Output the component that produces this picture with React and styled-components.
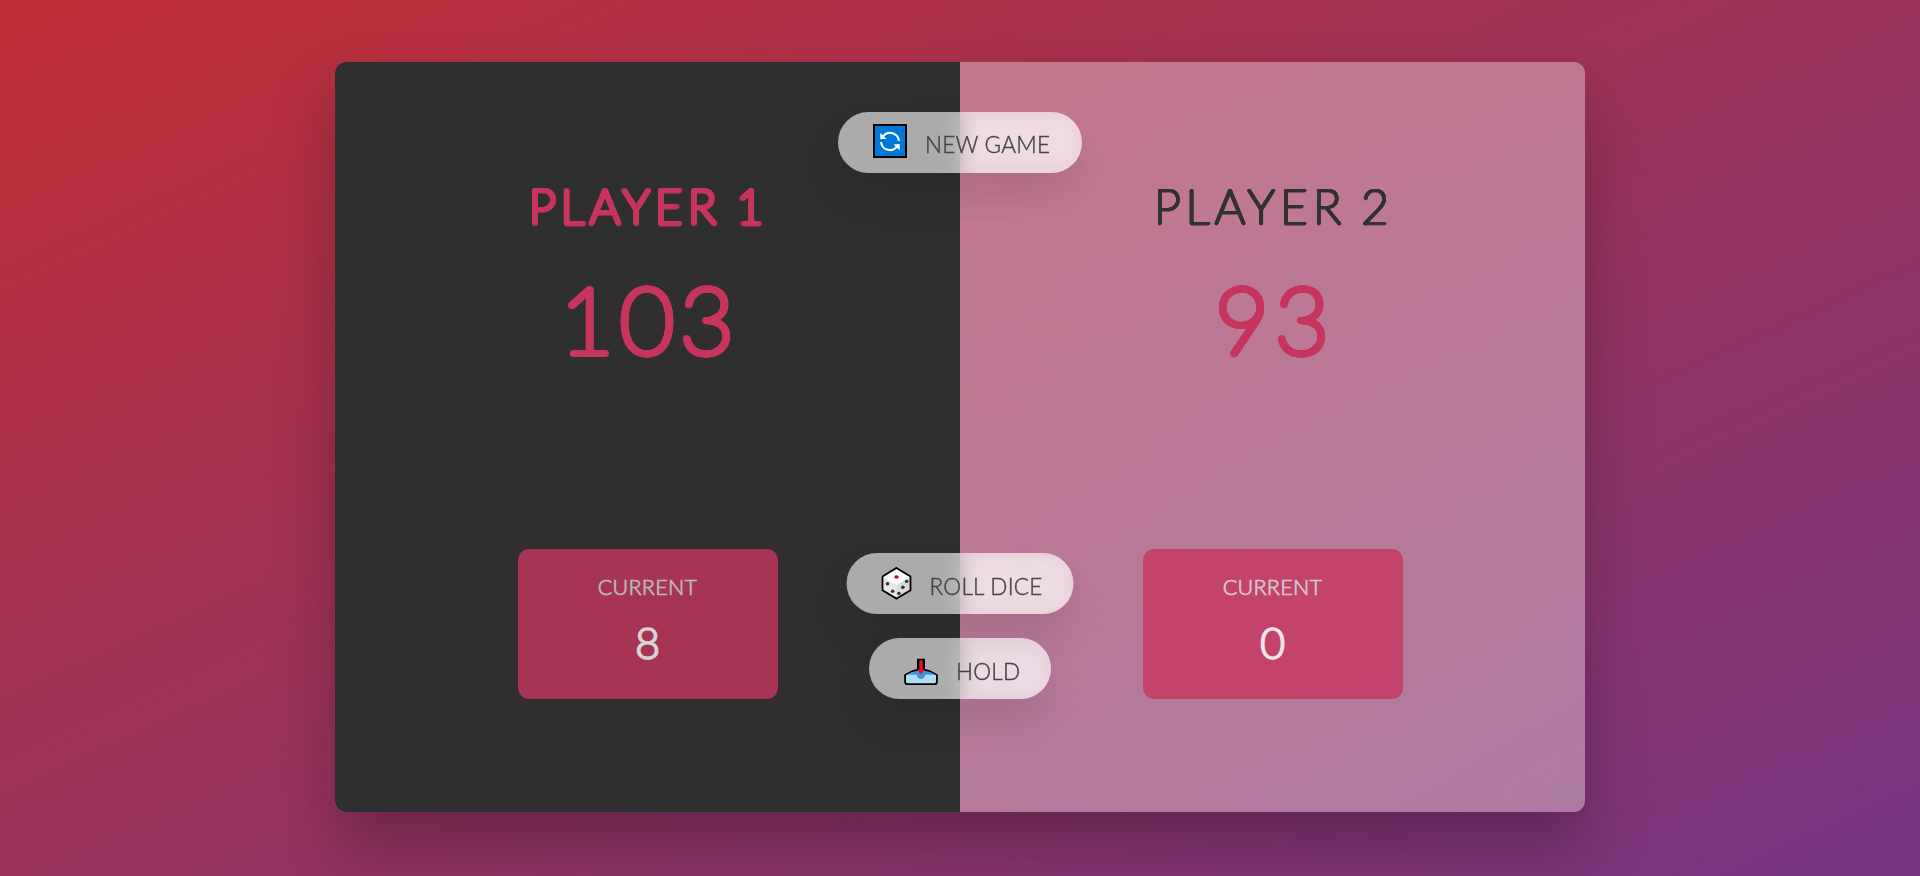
import React from 'react';
import styled, { createGlobalStyle, css } from 'styled-components';

// Rings of shadows thicken a hairline face into strokes with round ends.
const roundStroke = (radius) => {
  const shadows = [];
  for (const r of [radius, radius * 0.55]) {
    for (let i = 0; i < 24; i += 1) {
      const a = (i * Math.PI) / 12;
      shadows.push(`${(Math.cos(a) * r).toFixed(2)}px ${(Math.sin(a) * r).toFixed(2)}px 0 currentColor`);
    }
  }
  return shadows.join(', ');
};

const GlobalStyle = createGlobalStyle`
  *, *::before, *::after { margin: 0; padding: 0; box-sizing: inherit; }
  html { font-size: 12.5px; box-sizing: border-box; }
  body {
    font-family: Lato, "Open Sans", sans-serif;
    font-weight: 300;
    height: 100vh;
    color: #333;
    background-image: linear-gradient(to top left, #753682 0%, #bf2e34 100%);
    display: flex;
    align-items: center;
    justify-content: center;
    overflow: hidden;
  }
`;

const Board = styled.main`
  position: relative;
  width: 100rem;
  height: 60rem;
  margin-bottom: 2px;
  background-color: rgba(255, 255, 255, 0.35);
  backdrop-filter: blur(250px);
  box-shadow: 0 3rem 5rem rgba(0, 0, 0, 0.25);
  border-radius: 11.25px;
  overflow: hidden;
  display: flex;
`;

const Player = styled.section`
  flex: 50%;
  padding: 9rem 9rem 113px;
  display: flex;
  flex-direction: column;
  align-items: center;
  ${({ $winner }) => $winner && css`background-color: #2f2f2f;`}
`;

const Name = styled.h2`
  font-size: 47.5px;
  line-height: 62px;
  text-transform: uppercase;
  letter-spacing: 5.3px;
  word-spacing: -4px;
  padding-left: 3px;
  font-weight: 100;
  text-shadow: ${({ $winner }) => roundStroke($winner ? 2.5 : 1.5)};
  color: ${({ $winner }) => ($winner ? '#c7365f' : '#333')};
  margin-bottom: 1rem;
`;

const Score = styled.p`
  font-size: 93px;
  line-height: 139px;
  font-weight: 100;
  letter-spacing: 6px;
  padding-left: 5px;
  text-shadow: ${roundStroke(3.3)};
  color: #c7365f;
  margin-bottom: auto;
`;

const Current = styled.div`
  background-color: #c7365f;
  opacity: 0.8;
  border-radius: 11.25px;
  color: #fff;
  width: 65%;
  height: 150px;
  padding: 24px 2rem;
  text-align: center;
`;

const CurrentLabel = styled.p`
  text-transform: uppercase;
  margin-bottom: 11px;
  font-size: 21.5px;
  line-height: 29px;
  letter-spacing: 0.3px;
  -webkit-text-stroke: 0.7px;
  color: #ddd;
`;

const CurrentScore = styled.p`
  font-size: 43.5px;
  line-height: 59px;
  -webkit-text-stroke: 1.6px;
`;

const Button = styled.button`
  position: absolute;
  left: 50%;
  top: ${({ $top }) => $top};
  transform: translateX(-50%);
  display: flex;
  align-items: flex-start;
  gap: ${({ $gap = 18 }) => $gap}px;
  width: ${({ $width }) => $width}px;
  height: 60.5px;
  padding: 12px 0 0 ${({ $inset = 35 }) => $inset}px;
  border: none;
  border-radius: 50rem;
  color: #444;
  font-family: inherit;
  font-size: 1.8rem;
  font-weight: 300;
  line-height: ${({ $line = 43 }) => $line}px;
  letter-spacing: 0.25px;
  text-transform: uppercase;
  white-space: nowrap;
  -webkit-text-stroke: 0.4px;
  background-color: rgba(255, 255, 255, 0.6);
  backdrop-filter: blur(10px);
  box-shadow: 0 1.75rem 3.5rem rgba(0, 0, 0, 0.1);
  cursor: pointer;
`;

const Icon = styled.svg`
  width: 34px;
  height: 34px;
  flex: none;
  overflow: visible;
`;

const RefreshIcon = () => (
  <Icon viewBox="0 0 34 34">
    <rect x="1" y="1" width="32" height="32" fill="#0078d7" stroke="#000" strokeWidth="2" />
    <g fill="none" stroke="#fff" strokeWidth="2" strokeLinejoin="miter">
      <path d="M10 12.6A8.8 8.8 0 0 1 25.9 17" />
      <path d="M8.1 18A8.8 8.8 0 0 0 24 22.4" />
    </g>
    <path d="M7.3 8.9v6.3l6.2-.5zM26.7 26.3V20l-6.2.5z" fill="#fff" />
  </Icon>
);

const DiceIcon = () => (
  <Icon viewBox="0 0 34 34">
    <path d="M17 2.9 31 11.6V25.2L17 33.6 3 25.2V11.6z" fill="#f2f2f2" />
    <path d="M3 11.6 17 19.8V33.6L3 25.2z" fill="#e6e6e6" />
    <path d="M31 11.6 17 19.8V33.6L31 25.2z" fill="#dadada" />
    <path d="M17 2.9 31 11.6 17 19.8 3 11.6z" fill="#fff" />
    <path d="M17 2.9 31 11.6V25.2L17 33.6 3 25.2V11.6z" fill="none" stroke="#000" strokeWidth="1.8" />
    <ellipse cx="17" cy="12" rx="2.2" ry="1.7" fill="#d0021b" />
    <g fill="#333">
      <ellipse cx="8" cy="18.8" rx="1.8" ry="1.7" />
      <ellipse cx="13.2" cy="26.2" rx="1.8" ry="1.7" />
      <ellipse cx="27.2" cy="16.4" rx="1.8" ry="1.7" />
      <ellipse cx="23.4" cy="22.3" rx="1.8" ry="1.7" />
      <ellipse cx="19.4" cy="28.4" rx="1.8" ry="1.7" />
    </g>
  </Icon>
);

const InboxIcon = () => (
  <Icon viewBox="0 0 34 34">
    <path d="M1 25 8 21.2 13.8 19.4V9.6h6.4V19.4l5.8 1.8 7 3.8V31.9a2.3 2.3 0 0 1-2.3 2.3H3.3A2.3 2.3 0 0 1 1 31.9z" fill="#000" stroke="#000" strokeWidth="1.6" />
    <path d="M2 25.2 8.5 22H25.5L32 25.2V31.8a1.4 1.4 0 0 1-1.4 1.4H3.4A1.4 1.4 0 0 1 2 31.8z" fill="#b0dcf4" />
    <path d="M2.8 24.8 8.5 22 13 20.8h8L25.5 22 31.2 24.8H21.2a4.2 4.2 0 0 1-8.4 0z" fill="#3a96dd" />
    <path d="M15.3 10.2h3.4v9.2h2.6L17 24.2 12.7 19.4h2.6z" fill="#e81123" />
  </Icon>
);

export default function App() {
  return (
    <>
      <GlobalStyle />
      <Board>
        <Player $winner>
          <Name $winner>Player 1</Name>
          <Score>103</Score>
          <Current>
            <CurrentLabel>Current</CurrentLabel>
            <CurrentScore>8</CurrentScore>
          </Current>
        </Player>
        <Player>
          <Name>Player 2</Name>
          <Score>93</Score>
          <Current>
            <CurrentLabel>Current</CurrentLabel>
            <CurrentScore>0</CurrentScore>
          </Current>
        </Player>
        <Button $top="4rem" $width={244} $line={42}><RefreshIcon />New game</Button>
        <Button $top="39.3rem" $width={227} $inset={33} $gap={16}><DiceIcon />Roll dice</Button>
        <Button $top="46.1rem" $width={182}><InboxIcon />Hold</Button>
      </Board>
    </>
  );
}
